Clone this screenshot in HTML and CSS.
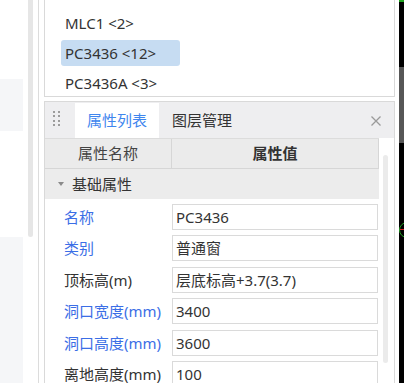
FILE: index.html
```html
<!DOCTYPE html>
<html lang="zh-CN">
<head>
  <meta charset="utf-8" />
  <title>属性列表</title>
  <link rel="stylesheet" href="styles.css">
</head>
<body>
  <div class="screen">
    <div class="left">
      <div class="left-col">
        <div class="left-box top"></div>
        <div class="left-box bottom"></div>
      </div>
      <div class="left-scroll"></div>
    </div>

    <div class="main">
      <div class="list-panel">
        <div class="list-item">MLC1 &lt;2&gt;</div>
        <div class="list-item selected">PC3436 &lt;12&gt;</div>
        <div class="list-item">PC3436A &lt;3&gt;</div>
      </div>

      <div class="prop-panel">
        <div class="prop-head">
          <div class="grip">
            <span></span><span></span><span></span><span></span>
            <span></span><span></span><span></span><span></span>
          </div>
          <div class="tab active">属性列表</div>
          <div class="tab">图层管理</div>
          <div class="close">
            <svg width="10" height="10" viewBox="0 0 10 10">
              <path d="M0.5 0.5 L9.5 9.5 M9.5 0.5 L0.5 9.5" stroke="#9a9a9a" stroke-width="1.3" fill="none" />
            </svg>
          </div>
        </div>

        <div class="prop-body">
          <div class="prop-table">
            <div class="th-row">
              <div class="th th-name">属性名称</div>
              <div class="th th-value">属性值</div>
            </div>
            <div class="group-row"><span class="caret"></span>基础属性</div>

            <div class="row">
              <div class="label blue">名称</div>
              <div class="field">PC3436</div>
            </div>
            <div class="row">
              <div class="label blue">类别</div>
              <div class="field">普通窗</div>
            </div>
            <div class="row">
              <div class="label">顶标高(m)</div>
              <div class="field">层底标高+3.7(3.7)</div>
            </div>
            <div class="row">
              <div class="label blue">洞口宽度(mm)</div>
              <div class="field">3400</div>
            </div>
            <div class="row">
              <div class="label blue">洞口高度(mm)</div>
              <div class="field">3600</div>
            </div>
            <div class="row">
              <div class="label">离地高度(mm)</div>
              <div class="field">100</div>
            </div>
          </div>
          <div class="vscroll"><div class="thumb"></div></div>
        </div>
      </div>
    </div>

    <div class="edge">
      <div class="edge-green"></div>
      <div class="edge-black first"></div>
      <div class="edge-grey"></div>
      <div class="edge-black second"></div>
      <div class="edge-mark"><div class="ring"></div><div class="tick"></div></div>
    </div>
  </div>
</body>
</html>
```

FILE: styles.css
```css
html, body {
  margin: 0;
  padding: 0;
}

body {
  font-family: "Noto Sans", "Noto Sans CJK SC", sans-serif;
  font-size: 15px;
  color: #333;
  background: #fff;
}

.screen {
  display: flex;
  width: 404px;
  height: 383px;
  overflow: hidden;
}

/* left strip */
.left {
  width: 38px;
  display: flex;
  gap: 5px;
  flex-shrink: 0;
}

.left-col {
  width: 23px;
  display: flex;
  flex-direction: column;
}

.left-box {
  background: #f5f6f8;
}

.left-box.top {
  margin-top: 79px;
  height: 52px;
}

.left-box.bottom {
  margin-top: 106px;
  flex: 1;
}

.left-scroll {
  width: 5px;
  height: 237px;
  background: #e6e6e6;
  border-radius: 0 0 3px 3px;
}

/* main column */
.main {
  width: 361px;
  box-sizing: border-box;
  border-left: 1px solid #dcdcdc;
  padding: 0 4px 0 5px;
  display: flex;
  flex-direction: column;
  flex-shrink: 0;
}

.list-panel {
  height: 97px;
  box-sizing: border-box;
  border: 1px solid #d9d9d9;
  border-top: none;
  padding: 10px 0 0 16px;
}

.list-item {
  width: 119px;
  height: 26px;
  line-height: 26px;
  padding-left: 4px;
  box-sizing: border-box;
  margin-bottom: 4px;
  border-radius: 3px;
  white-space: nowrap;
  color: #333;
}

.list-item.selected {
  background: #c6dcf2;
}

.prop-panel {
  margin-top: 4px;
  flex: 1;
  border: 1px solid #d9d9d9;
  border-bottom: none;
  display: flex;
  flex-direction: column;
  overflow: hidden;
}

.prop-head {
  height: 36px;
  background: #eeeef0;
  display: flex;
  align-items: flex-end;
  flex-shrink: 0;
}

.grip {
  width: 30px;
  height: 36px;
  box-sizing: border-box;
  padding: 9px 0 0 8px;
  display: grid;
  grid-template-columns: 2px 2px;
  grid-auto-rows: 2px;
  column-gap: 3px;
  row-gap: 2.4px;
  align-content: start;
}

.grip span {
  background: #9c9c9c;
}

.tab {
  height: 35px;
  line-height: 35px;
  padding: 0 12px;
  color: #333;
}

.tab.active {
  background: #fff;
  color: #3f86ee;
}

.tab + .tab {
  padding-left: 13px;
}

.close {
  margin-left: auto;
  margin-right: 13px;
  align-self: center;
  height: 10px;
  margin-top: 2px;
}

.close svg {
  display: block;
}

.prop-body {
  flex: 1;
  display: flex;
}

.prop-table {
  width: 334px;
}

.th-row {
  display: flex;
  height: 31px;
  box-sizing: border-box;
  border-top: 1px solid #dcdcdc;
  border-bottom: 1px solid #d6d6d6;
  background: #ebebeb;
}

.th {
  line-height: 29px;
  text-align: center;
  border-right: 1px solid #d6d6d6;
  color: #444;
}

.th-name {
  width: 127px;
  box-sizing: border-box;
}

.th-value {
  width: 207px;
  box-sizing: border-box;
  font-weight: bold;
  color: #333;
}

.group-row {
  height: 30px;
  line-height: 30px;
  background: #ececec;
  padding-left: 13px;
  display: flex;
  align-items: center;
}

.caret {
  width: 0;
  height: 0;
  border-left: 3px solid transparent;
  border-right: 3px solid transparent;
  border-top: 4px solid #8a8a8a;
  margin-right: 8px;
}

.row {
  display: flex;
  height: 31.4px;
  box-sizing: border-box;
  padding-top: 5px;
}

.label {
  width: 127px;
  box-sizing: border-box;
  padding-left: 19px;
  height: 26px;
  line-height: 26px;
  white-space: nowrap;
  color: #333;
}

.label.blue {
  color: #3b6ee6;
}

.field {
  width: 206px;
  height: 26px;
  box-sizing: border-box;
  border: 1px solid #dadada;
  padding-left: 3px;
  line-height: 24px;
  white-space: nowrap;
  color: #333;
}

.vscroll {
  width: 15px;
  padding-left: 4px;
  box-sizing: border-box;
}

.thumb {
  width: 5px;
  height: 208px;
  margin-top: 17px;
  background: #ebebeb;
  border-radius: 3px;
}

/* right edge of the drawing view */
.edge {
  width: 5px;
  flex-shrink: 0;
  background: #000;
  display: flex;
  flex-direction: column;
  overflow: hidden;
}

.edge-green {
  height: 2px;
  background: #1fa51f;
}

.edge-black.first {
  height: 65px;
}

.edge-grey {
  height: 76px;
  background: #575757;
}

.edge-black.second {
  height: 79px;
}

.edge-mark {
  height: 16px;
  position: relative;
}

.ring {
  width: 16px;
  height: 16px;
  box-sizing: border-box;
  border: 1px solid #23a023;
  border-radius: 50%;
}

.tick {
  position: absolute;
  left: 1px;
  top: 7px;
  width: 4px;
  height: 1px;
  background: #d02020;
}
```
